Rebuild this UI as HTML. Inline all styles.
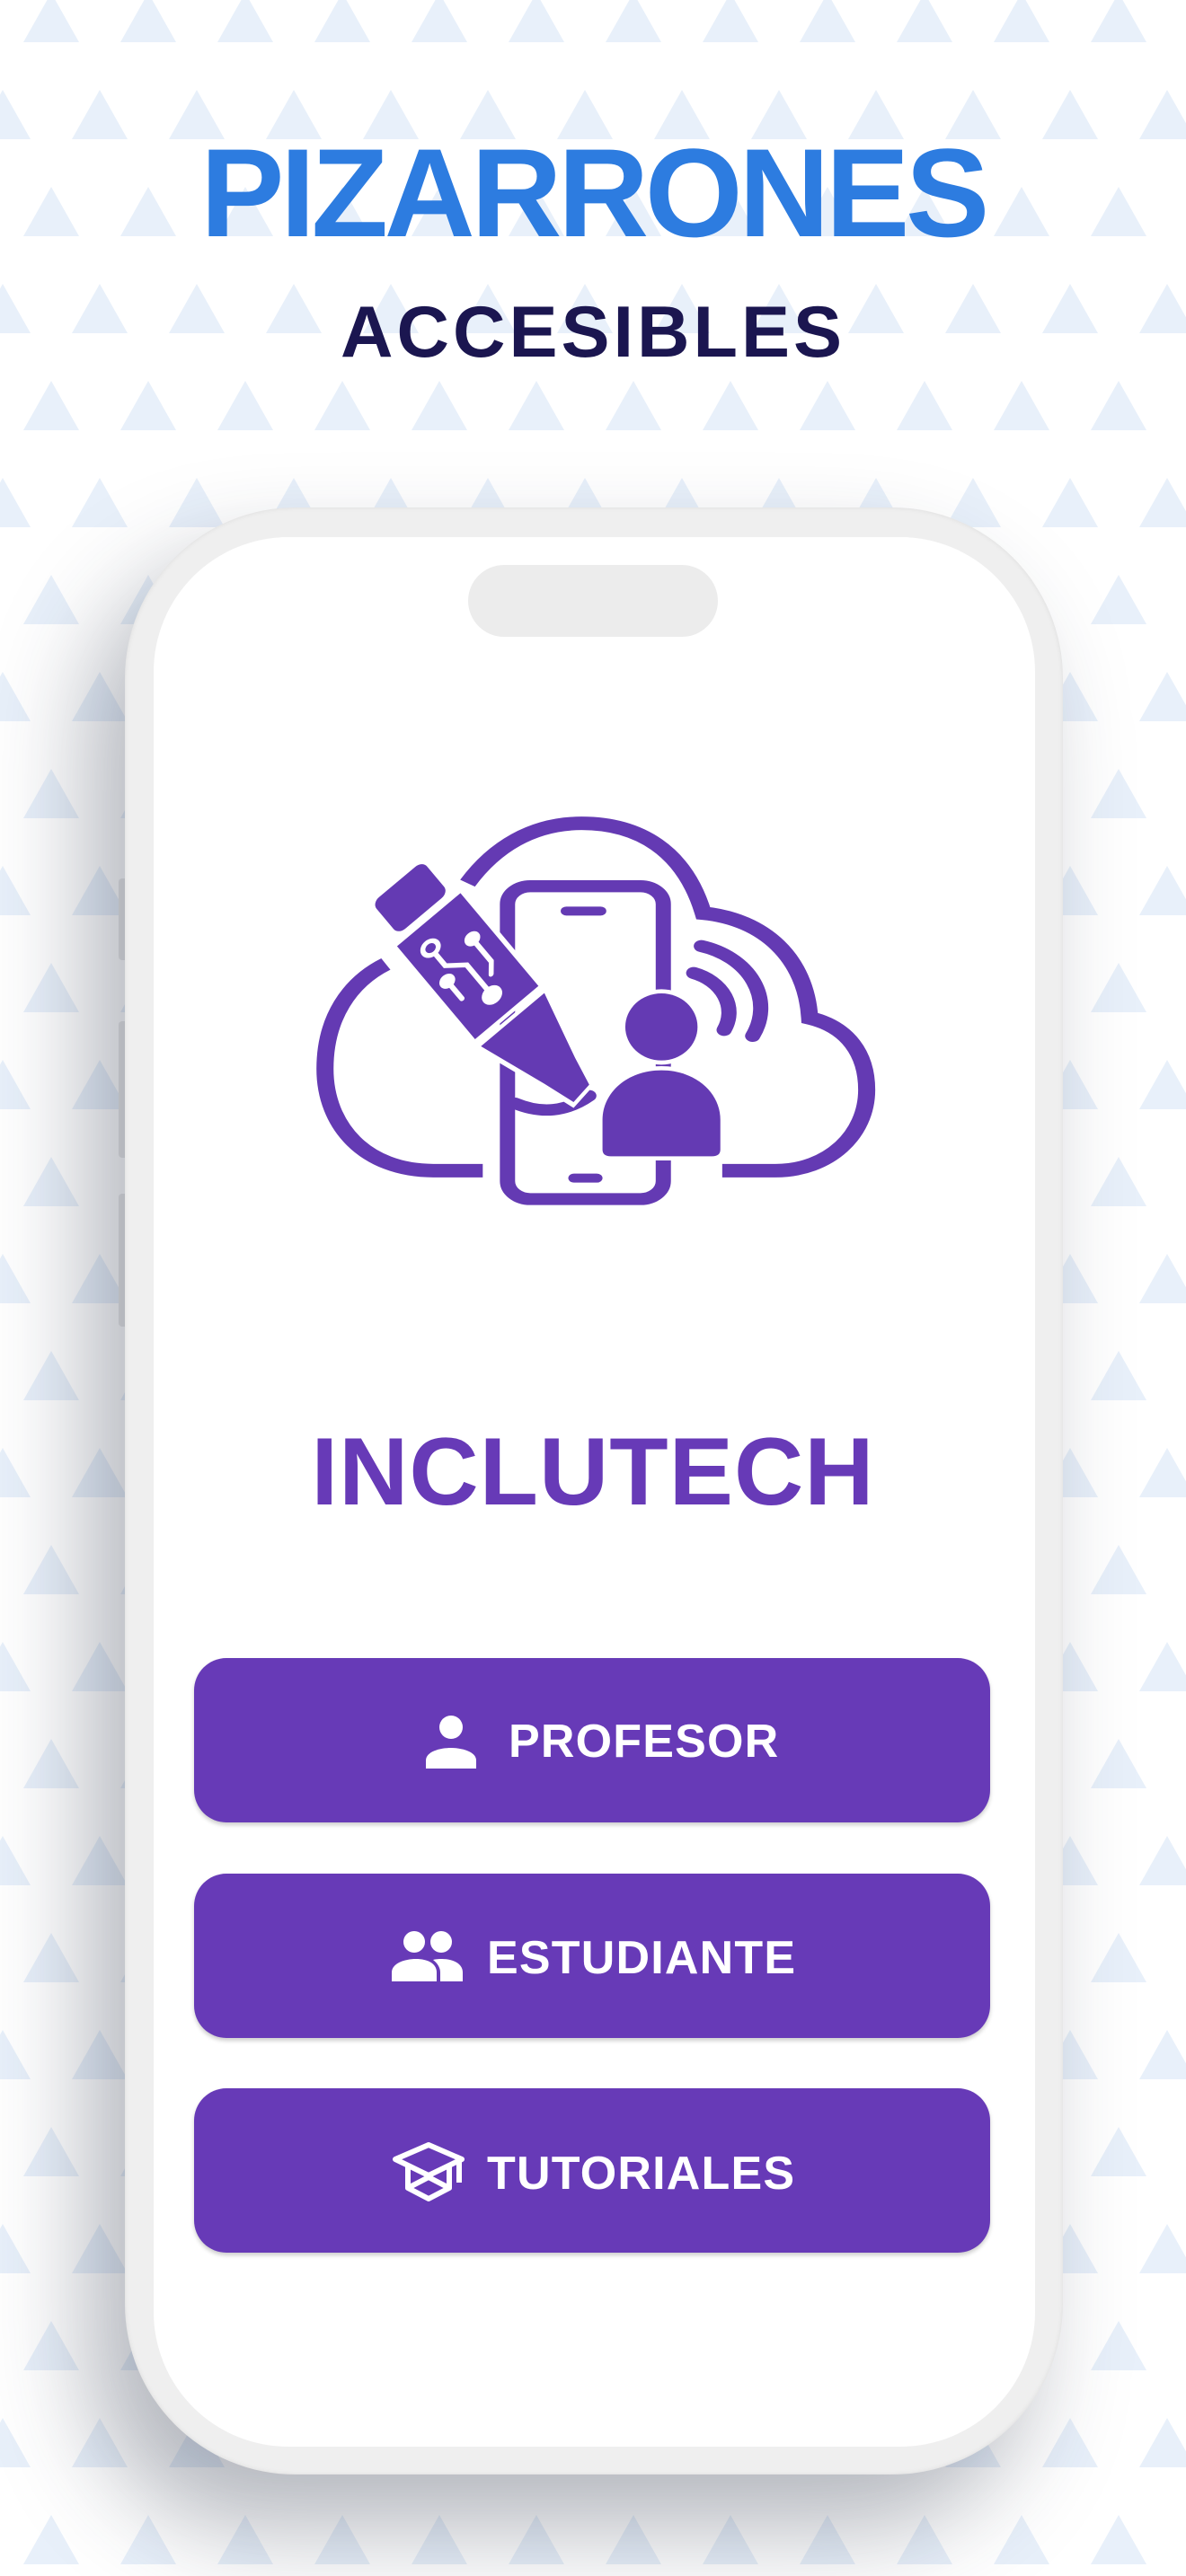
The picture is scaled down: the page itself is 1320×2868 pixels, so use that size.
<!DOCTYPE html>
<html><head><meta charset="utf-8"><style>
html,body{margin:0;padding:0}
body{width:1320px;height:2868px;position:relative;overflow:hidden;background:#fff;font-family:"Liberation Sans",sans-serif}
.bg{position:absolute;left:0;top:0}
.t1{position:absolute;left:0;width:1320px;top:140px;text-align:center;font-weight:bold;font-size:140px;line-height:150px;color:#2d7ce0;letter-spacing:-4.4px}
.t2{position:absolute;left:0;width:1320px;top:325px;text-align:center;font-weight:bold;font-size:81px;line-height:90px;color:#1b1650;letter-spacing:4px}
.phone{position:absolute;left:139px;top:565px;width:1044px;height:2190px;border-radius:190px;background:#efefef;box-shadow:-40px 60px 110px rgba(40,50,70,.35),inset 0 0 6px rgba(0,0,0,.08)}
.screen{position:absolute;left:171px;top:598px;width:981px;height:2126px;border-radius:150px;background:#fff}
.notch{position:absolute;left:521px;top:629px;width:278px;height:80px;border-radius:40px;background:#ececec}
.sb{position:absolute;left:132px;width:10px;background:#eaeaea;border-radius:4px 0 0 4px}
.title{position:absolute;left:0;width:1320px;top:1578px;text-align:center;font-weight:bold;font-size:107px;line-height:120px;color:#673ab7;letter-spacing:1px}
.btn{position:absolute;left:216px;width:886px;height:183px;border-radius:36px;background:#673ab7;box-shadow:0 3px 5px rgba(0,0,0,.2)}
.lbl{position:absolute;color:#fff;font-weight:bold;font-size:52px;line-height:60px;white-space:nowrap;letter-spacing:1.2px}
</style></head><body>
<svg class="bg" width="1320" height="2868">
<defs><pattern id="p" x="0" y="-8" width="108" height="216" patternUnits="userSpaceOnUse">
<polygon points="57,0 88,55 26,55" fill="#e8f0fa"/>
<polygon points="3,108 34,163 -28,163" fill="#e8f0fa"/>
<polygon points="111,108 142,163 80,163" fill="#e8f0fa"/>
</pattern></defs>
<rect width="1320" height="2868" fill="url(#p)"/>
</svg>
<div class="t1">PIZARRONES</div>
<div class="t2">ACCESIBLES</div>
<div class="sb" style="top:978px;height:91px"></div>
<div class="sb" style="top:1137px;height:152px"></div>
<div class="sb" style="top:1329px;height:148px"></div>
<div class="phone"></div>
<div class="screen"></div>
<div class="notch"></div>

<svg style="position:absolute;left:330px;top:880px" width="660" height="480" viewBox="0 0 1560 1440" preserveAspectRatio="none">
<g fill="none" stroke="#643ab3" stroke-width="45">
<path d="M490,1270 L360,1270 C180,1270 75,1120 75,930 C75,760 140,640 235,580"/>
<path d="M450,310 C520,190 620,110 750,110 C900,110 1020,200 1070,410 C1230,430 1340,560 1350,760 C1450,790 1500,880 1500,1000 C1500,1150 1400,1270 1260,1270 L1120,1270"/>
<rect x="555" y="320" width="410" height="1045" rx="60" stroke-width="40"/>
<path d="M575,1045 Q680,1100 770,1020" stroke-width="38" stroke-linecap="round"/>
<path d="M1065,520 A215,215 0 0 1 1200,820" stroke-width="40" stroke-linecap="round"/>
<path d="M1045,610 A140,140 0 0 1 1125,800" stroke-width="40" stroke-linecap="round"/>
</g>
<g stroke="#643ab3" stroke-width="30" stroke-linecap="round">
<line x1="710" y1="403" x2="800" y2="403"/>
<line x1="730" y1="1295" x2="790" y2="1295"/>
</g>
<g fill="#643ab3" stroke="#fff" stroke-width="28" paint-order="stroke">
<ellipse cx="960" cy="790" rx="95" ry="112"/>
<path d="M805,1200 L805,1100 C805,1010 870,935 960,935 C1050,935 1115,1010 1115,1100 L1115,1200 Q1115,1222 1093,1222 L827,1222 Q805,1222 805,1200 Z"/>
</g>
</svg>
<svg style="position:absolute;left:0;top:0" width="1320" height="1400">
<g transform="translate(442,982) rotate(-40) scale(0.47,0.365)">
<g fill="#643ab3" stroke="#fff" stroke-width="24" paint-order="stroke">
<rect x="-78" y="0" width="156" height="125" rx="22"/>
<rect x="-98" y="150" width="196" height="370"/>
<path d="M-98,548 L98,548 L55,760 L40,850 L-15,860 L-40,760 Z"/>
</g>
<g fill="none" stroke="#fff" stroke-width="13" stroke-linecap="round">
<circle cx="-40" cy="220" r="20"/>
<path d="M-40,240 L-40,290 L0,330 L0,430"/>
<circle cx="0" cy="450" r="20" fill="#fff"/>
<circle cx="-60" cy="330" r="14" fill="#fff"/>
<path d="M-60,330 L-60,400"/>
<circle cx="50" cy="280" r="14" fill="#fff"/>
<path d="M50,280 L50,370 L30,400"/>
</g>
</g>
</svg>

<div class="title">INCLUTECH</div>

<div class="btn" style="top:1846px"></div>
<div class="btn" style="top:2086px"></div>
<div class="btn" style="top:2325px"></div>

<svg style="position:absolute;left:472px;top:1910px" width="60" height="60" viewBox="0 0 60 60">
<circle cx="30" cy="13" r="13" fill="#fff"/>
<path d="M2,59 L2,50 C2,40 18,36 30,36 C42,36 58,40 58,50 L58,59 Z" fill="#fff"/>
</svg>
<div class="lbl" style="left:566px;top:1909px">PROFESOR</div>

<svg style="position:absolute;left:436px;top:2150px" width="80" height="56" viewBox="0 0 80 56">
<circle cx="25" cy="12" r="12" fill="#fff"/>
<circle cx="55" cy="12" r="12" fill="#fff"/>
<path d="M0,56 L0,46 C0,36 14,31 27,31 C40,31 50,36 50,46 L50,56 Z" fill="#fff"/>
<path d="M54,56 L54,46 C54,40 50,35 46,32 C50,31 54,31 56,31 C68,31 79,36 79,46 L79,56 Z" fill="#fff"/>
</svg>
<div class="lbl" style="left:542px;top:2150px">ESTUDIANTE</div>

<svg style="position:absolute;left:436px;top:2384px" width="82" height="68" viewBox="0 0 82 68">
<g fill="none" stroke="#fff" stroke-width="6" stroke-linejoin="round">
<path d="M4,20 L41,4 L78,20 L41,38 Z"/>
<path d="M18,28 L18,52 L41,64 L64,52 L64,28"/>
<path d="M18,52 L41,40 L64,52"/>
<path d="M75,22 L75,46"/>
</g>
</svg>
<div class="lbl" style="left:542px;top:2390px">TUTORIALES</div>
</body></html>
